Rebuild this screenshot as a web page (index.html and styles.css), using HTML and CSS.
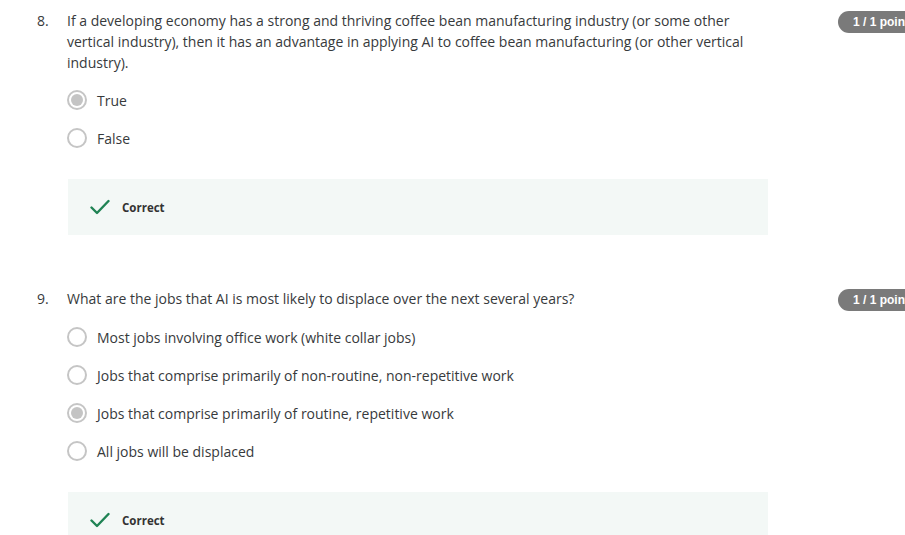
FILE: index.html
```html
<!DOCTYPE html>
<html lang="en">
<head>
<meta charset="utf-8">
<title>Quiz</title>
<link rel="stylesheet" href="styles.css">
</head>
<body>
<div class="page">
  <section class="question q8">
    <div class="head">
      <div class="num">8.</div>
      <div class="body">
        <div class="prompt">If a developing economy has a strong and thriving coffee bean manufacturing industry (or some other vertical industry), then it has an advantage in applying AI to coffee bean manufacturing (or other vertical industry).</div>
        <div class="options">
          <div class="option"><span class="radio checked"></span><span class="label">True</span></div>
          <div class="option"><span class="radio"></span><span class="label">False</span></div>
        </div>
        <div class="feedback">
          <svg class="check" width="20" height="16" viewBox="0 0 20 16"><path d="M1.5 8.5 L7 14 L18.5 2" fill="none" stroke="#1f8354" stroke-width="2.4" stroke-linecap="round" stroke-linejoin="round"/></svg>
          <span class="fb-text">Correct</span>
        </div>
      </div>
      <div class="badge">1 / 1 point</div>
    </div>
  </section>

  <section class="question q9">
    <div class="head">
      <div class="num">9.</div>
      <div class="body">
        <div class="prompt">What are the jobs that AI is most likely to displace over the next several years?</div>
        <div class="options">
          <div class="option"><span class="radio"></span><span class="label">Most jobs involving office work (white collar jobs)</span></div>
          <div class="option"><span class="radio"></span><span class="label">Jobs that comprise primarily of non-routine, non-repetitive work</span></div>
          <div class="option"><span class="radio checked"></span><span class="label">Jobs that comprise primarily of routine, repetitive work</span></div>
          <div class="option"><span class="radio"></span><span class="label">All jobs will be displaced</span></div>
        </div>
        <div class="feedback">
          <svg class="check" width="20" height="16" viewBox="0 0 20 16"><path d="M1.5 8.5 L7 14 L18.5 2" fill="none" stroke="#1f8354" stroke-width="2.4" stroke-linecap="round" stroke-linejoin="round"/></svg>
          <span class="fb-text">Correct</span>
        </div>
      </div>
      <div class="badge">1 / 1 point</div>
    </div>
  </section>
</div>
</body>
</html>
```

FILE: styles.css
```css
html, body {
  margin: 0;
  padding: 0;
  background: #ffffff;
  overflow: hidden;
}
body {
  font-family: "Open Sans", "Liberation Sans", Arial, sans-serif;
  font-size: 14px;
  line-height: 21px;
  color: #373a3c;
}
.page {
  width: 960px;
}
.question {
  padding-left: 37px;
}
.q8 {
  padding-top: 10px;
}
.q9 {
  padding-top: 53px;
}
.head {
  display: flex;
  align-items: flex-start;
}
.num {
  width: 30px;
  flex-shrink: 0;
}
.body {
  width: 701px;
  flex-shrink: 0;
}
.prompt {
  width: 690px;
}
.options {
  display: flex;
  flex-direction: column;
  padding-top: 8px;
}
.q9 .options {
  padding-top: 9px;
}
.option {
  height: 38px;
  display: flex;
  align-items: center;
  gap: 10px;
}
.radio {
  width: 20px;
  height: 20px;
  box-sizing: border-box;
  border: 2px solid #c5c5c5;
  border-radius: 50%;
  background: #fff;
  flex-shrink: 0;
  display: flex;
  align-items: center;
  justify-content: center;
}
.radio.checked::after {
  content: "";
  width: 12px;
  height: 12px;
  border-radius: 50%;
  background: #c4c4c4;
}
.feedback {
  margin-top: 22px;
  margin-left: 1px;
  width: 700px;
  height: 56px;
  background: #f3f8f6;
  display: flex;
  align-items: center;
  padding-left: 22px;
  box-sizing: border-box;
  gap: 12px;
}
.check {
  display: block;
}
.fb-text {
  font-size: 11.5px;
  font-weight: 700;
  color: #333;
}
.badge {
  margin-left: 70px;
  margin-top: 1px;
  flex-shrink: 0;
  height: 22px;
  line-height: 22px;
  padding: 0 14px 0 15px;
  border-radius: 11px;
  background: #7a7a7a;
  color: #fff;
  font-family: "Liberation Sans", Arial, sans-serif;
  font-weight: 700;
  font-size: 12px;
  white-space: nowrap;
}
```
